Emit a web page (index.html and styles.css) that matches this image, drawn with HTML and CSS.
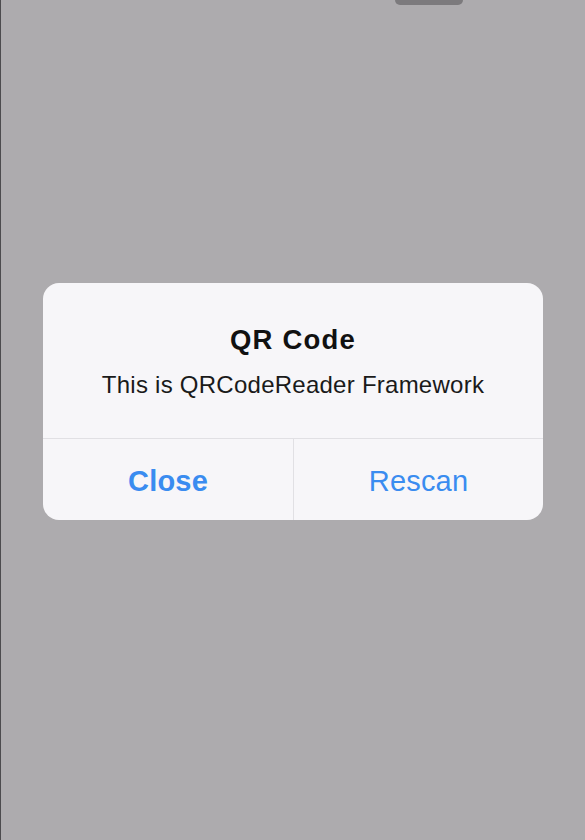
FILE: index.html
```html
<!DOCTYPE html>
<html lang="en">
<head>
<meta charset="utf-8">
<title>QR Code</title>
<link rel="stylesheet" href="styles.css">
</head>
<body>
<div class="screen">
  <div class="notch"></div>
  <div class="alert" role="alertdialog">
    <div class="alert-body">
      <h1 class="alert-title">QR Code</h1>
      <p class="alert-message">This is QRCodeReader Framework</p>
    </div>
    <div class="alert-actions">
      <button class="alert-btn alert-btn-bold">Close</button>
      <button class="alert-btn">Rescan</button>
    </div>
  </div>
</div>
</body>
</html>
```
FILE: styles.css
```css
* { box-sizing: border-box; }
html, body {
  margin: 0;
  padding: 0;
  background: #adabae;
}
body {
  font-family: "Liberation Sans", Arial, sans-serif;
}
.screen {
  position: relative;
  width: 585px;
  height: 840px;
  border-left: 1px solid #4c4b4e;
  padding-top: 283px;
  overflow: hidden;
}
.notch {
  position: absolute;
  top: 0;
  left: 394px;
  width: 68px;
  height: 5px;
  background: #7c7a7d;
  border-radius: 0 0 6px 6px;
}
.alert {
  width: 500px;
  margin: 0 0 0 42px;
  background: #f7f6f9;
  border-radius: 16px;
  overflow: hidden;
}
.alert-body {
  height: 155px;
  padding-top: 41px;
  text-align: center;
}
.alert-title {
  margin: 0;
  font-size: 27.5px;
  line-height: 31px;
  font-weight: 700;
  letter-spacing: 1.2px;
  color: #111;
}
.alert-message {
  margin: 16px 0 0;
  font-size: 24px;
  line-height: 28px;
  letter-spacing: 0.25px;
  color: #1a1a1a;
}
.alert-actions {
  display: grid;
  grid-template-columns: 250px 250px;
  border-top: 1px solid #e1e0e4;
  height: 82px;
}
.alert-btn {
  border: 0;
  background: transparent;
  font-family: "Liberation Sans", Arial, sans-serif;
  font-size: 29px;
  color: #3a8cf0;
  padding: 4px 0 0;
  margin: 0;
  height: 81px;
  letter-spacing: 0.2px;
}
.alert-btn + .alert-btn {
  border-left: 1px solid #e1e0e4;
}
.alert-btn-bold {
  font-weight: 700;
}
```
